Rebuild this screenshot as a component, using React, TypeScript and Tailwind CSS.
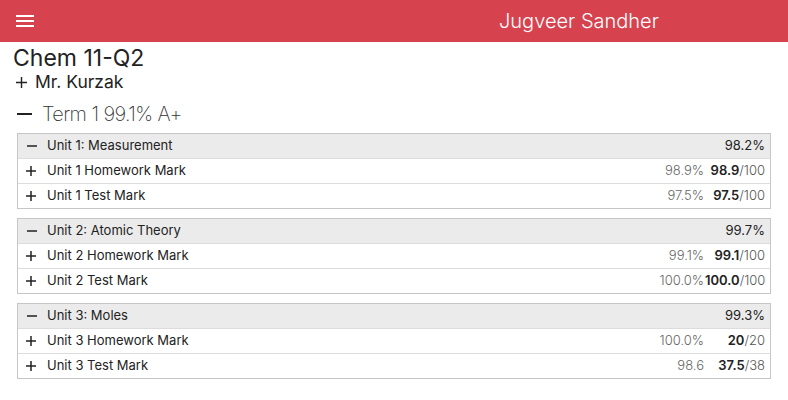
const font = { fontFamily: "Inter, 'Noto Sans', sans-serif" };

type Mark = {
	name: string;
	pct: string;
	got: string;
	out: string;
};

type Unit = {
	title: string;
	avg: string;
	marks: Mark[];
};

const units: Unit[] = [
	{
		title: "Unit 1: Measurement",
		avg: "98.2%",
		marks: [
			{ name: "Unit 1 Homework Mark", pct: "98.9%", got: "98.9", out: "100" },
			{ name: "Unit 1 Test Mark", pct: "97.5%", got: "97.5", out: "100" },
		],
	},
	{
		title: "Unit 2: Atomic Theory",
		avg: "99.7%",
		marks: [
			{ name: "Unit 2 Homework Mark", pct: "99.1%", got: "99.1", out: "100" },
			{ name: "Unit 2 Test Mark", pct: "100.0%", got: "100.0", out: "100" },
		],
	},
	{
		title: "Unit 3: Moles",
		avg: "99.3%",
		marks: [
			{ name: "Unit 3 Homework Mark", pct: "100.0%", got: "20", out: "20" },
			{ name: "Unit 3 Test Mark", pct: "98.6", got: "37.5", out: "38" },
		],
	},
];

function Plus({ size = 10, stroke = 1.5 }: { size?: number; stroke?: number }) {
	return (
		<svg width={size} height={size} viewBox="0 0 10 10" className="shrink-0">
			<path d="M0 5H10M5 0V10" stroke="#222" strokeWidth={stroke} />
		</svg>
	);
}

function Minus({ width = 10, stroke = 1.5 }: { width?: number; stroke?: number }) {
	return (
		<svg width={width} height={4} viewBox={`0 0 ${width} 4`} className="shrink-0">
			<path d={`M0 2H${width}`} stroke="#222" strokeWidth={stroke} />
		</svg>
	);
}

function UnitTable({ unit }: { unit: Unit }) {
	return (
		<div className="mx-[5px] border border-[#c6c6c6] text-[13px] text-[#222]">
			<div className="flex h-[24px] items-center bg-[#ebebeb] pl-[9px] pr-[5px]">
				<Minus />
				<span className="ml-[10px] flex-1">{unit.title}</span>
				<span>{unit.avg}</span>
			</div>
			{unit.marks.map((m) => (
				<div
					key={m.name}
					className="flex h-[25px] items-center border-t border-[#dcdcdc] pl-[8px] pr-[5px]"
				>
					<Plus />
					<span className="ml-[11px] flex-1">{m.name}</span>
					<span className="w-[60px] pr-[1px] text-right font-light text-[#666]">{m.pct}</span>
					<span className="w-[60px] text-right">
						<b className="font-semibold">{m.got}</b>
						<span className="font-light text-[#555]">/{m.out}</span>
					</span>
				</div>
			))}
		</div>
	);
}

export default function App() {
	return (
		<div className="min-h-[400px] bg-white" style={font}>
			<div className="flex h-[42px] items-center bg-[#d6434f] pl-[16px]">
				<div className="flex w-[18px] flex-col gap-[3px]">
					<div className="h-[2px] bg-white" />
					<div className="h-[2px] bg-white" />
					<div className="h-[2px] bg-white" />
				</div>
				<span className="ml-[465px] text-[20px] font-light text-white">Jugveer Sandher</span>
			</div>
			<div className="px-[12px]">
				<h1 className="mt-[3px] pl-[1px] text-[23px] leading-[26px] text-[#222]">Chem 11-Q2</h1>
				<div className="flex h-[23px] items-center pl-[4px] text-[17.5px] text-[#222]">
					<Plus size={11} stroke={1.3} />
					<span className="ml-[8px]">Mr. Kurzak</span>
				</div>
				<div className="mt-[7px] flex h-[26px] items-center pl-[5px] text-[20px] font-extralight tracking-[-0.6px] text-[#333]">
					<Minus width={15} stroke={2} />
					<span className="ml-[10px]">Term 1 99.1% A+</span>
				</div>
				<div className="mt-[6px] flex flex-col gap-[9px]">
					{units.map((u) => (
						<UnitTable key={u.title} unit={u} />
					))}
				</div>
			</div>
		</div>
	);
}
